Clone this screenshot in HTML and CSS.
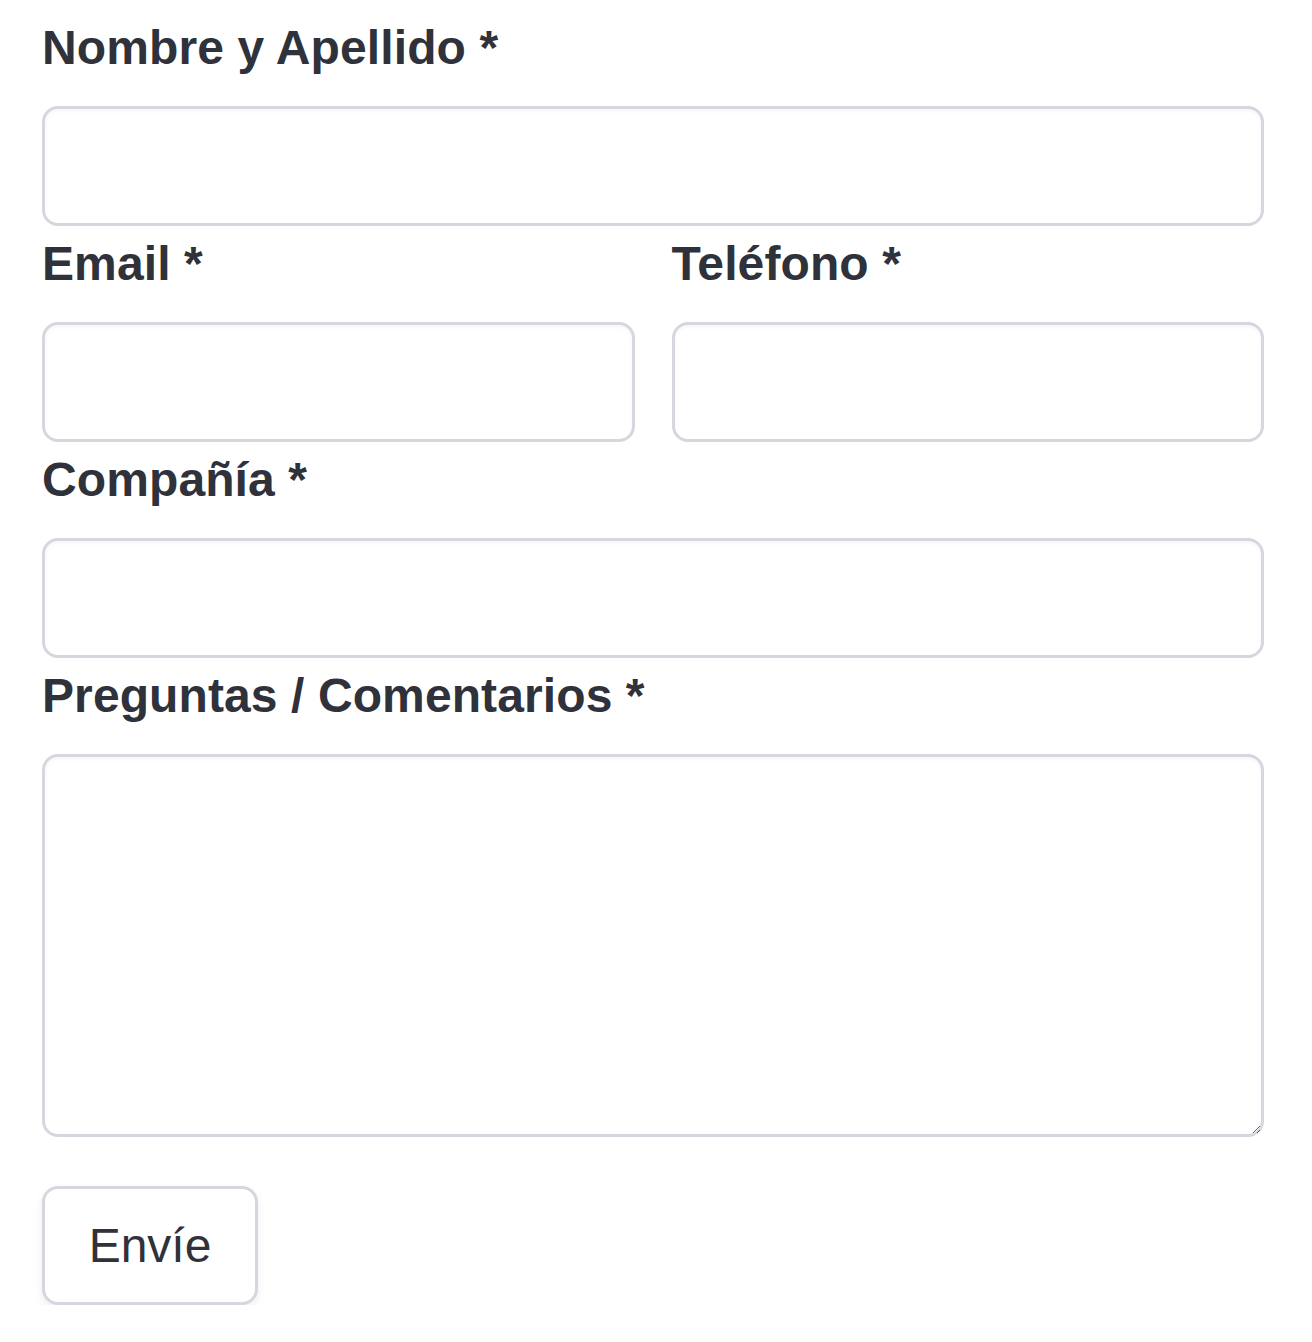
FILE: index.html
```html
<!DOCTYPE html>
<html lang="es">
<head>
<meta charset="utf-8">
<title>Formulario</title>
<link rel="stylesheet" href="styles.css">
</head>
<body>
<form class="form">
  <div class="field">
    <label class="label" for="nombre">Nombre y Apellido *</label>
    <input class="input" id="nombre" type="text">
  </div>
  <div class="row">
    <div class="field">
      <label class="label" for="email">Email *</label>
      <input class="input" id="email" type="email">
    </div>
    <div class="field">
      <label class="label" for="tel">Teléfono *</label>
      <input class="input" id="tel" type="tel">
    </div>
  </div>
  <div class="field">
    <label class="label" for="comp">Compañía *</label>
    <input class="input" id="comp" type="text">
  </div>
  <div class="field">
    <label class="label" for="preg">Preguntas / Comentarios *</label>
    <textarea class="input textarea" id="preg"></textarea>
  </div>
  <div class="actions">
    <button class="button" type="button">Envíe</button>
  </div>
</form>
</body>
</html>
```
FILE: styles.css
```css
html, body {
  margin: 0;
  padding: 0;
  background: #ffffff;
}
body {
  font-family: "Liberation Sans", Arial, sans-serif;
  color: #2f323a;
}
.form {
  padding: 10px 48px 0 42px;
  display: flex;
  flex-direction: column;
}
.field {
  display: flex;
  flex-direction: column;
}
.row {
  display: grid;
  grid-template-columns: 1fr 1fr;
  column-gap: 37px;
}
.label {
  font-size: 48px;
  font-weight: 700;
  line-height: 76px;
  margin-bottom: 20px;
  color: #2f323a;
  letter-spacing: 0.1px;
}
.input {
  box-sizing: border-box;
  width: 100%;
  height: 120px;
  margin: 0;
  border: 3px solid #d6d7de;
  border-radius: 16px;
  background: #ffffff;
  box-shadow: inset 0 2px 4px rgba(0, 0, 0, 0.04);
  font-family: inherit;
  font-size: 40px;
  outline: none;
}
.textarea {
  height: 383px;
  resize: vertical;
  display: block;
}
.actions {
  padding-top: 49px;
}
.button {
  box-sizing: border-box;
  width: 216px;
  height: 119px;
  border: 3px solid #d6d7de;
  border-radius: 16px;
  background: #ffffff;
  box-shadow: 0 4px 10px rgba(0, 0, 0, 0.07);
  font-family: "Liberation Sans", Arial, sans-serif;
  font-size: 48px;
  font-weight: 400;
  color: #2f323a;
  padding: 0;
}
```
